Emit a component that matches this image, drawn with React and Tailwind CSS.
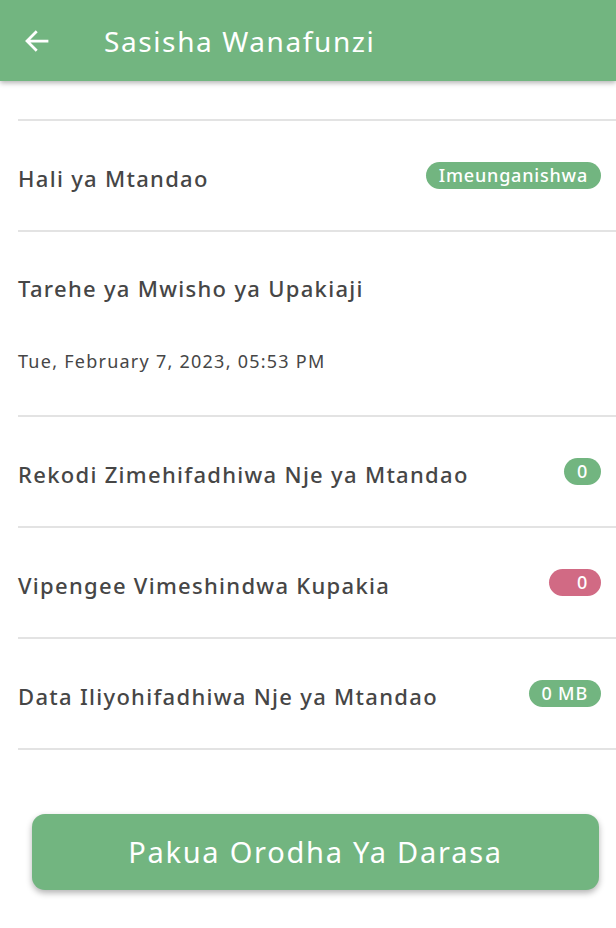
import React from "react";

const font = { fontFamily: '"Noto Sans", "Open Sans", sans-serif' };

function Row({ label, badge, color }) {
  return (
    <div className="flex h-[111px] items-center justify-between border-b-2 border-[#e3e3e3] pr-[15px]">
      <span className="pt-[6px] text-[22px] font-medium tracking-[1.3px] text-[#464646]">{label}</span>
      {badge && (
        <span className={`flex h-[27px] items-center rounded-full px-[13px] text-[18px] font-medium tracking-[0.8px] text-white ${color}`}>
          {badge}
        </span>
      )}
    </div>
  );
}

export default function App() {
  return (
    <div className="relative h-[928px] w-[616px] overflow-hidden bg-white" style={font}>
      <div className="relative z-10 flex h-[81px] items-center bg-[#72b580] shadow-[0_2px_5px_rgba(0,0,0,0.3)]">
        <svg className="ml-[22px] h-[30px] w-[30px]" viewBox="0 0 24 24" fill="none" stroke="white" strokeWidth="2.2" strokeLinecap="square">
          <path d="M20 12H5M11 5l-7 7 7 7" />
        </svg>
        <span className="ml-[52px] text-[28px] tracking-[1.6px] text-white">Sasisha Wanafunzi</span>
      </div>
      <div className="ml-[18px] mt-[38px] border-t-2 border-[#e3e3e3]">
        <Row label="Hali ya Mtandao" badge="Imeunganishwa" color="bg-[#72b580]" />
        <div className="flex h-[185px] flex-col justify-center gap-[43px] border-b-2 border-[#e3e3e3]">
          <span className="text-[22px] font-medium tracking-[1.3px] text-[#464646]">Tarehe ya Mwisho ya Upakiaji</span>
          <span className="text-[18px] tracking-[1.25px] text-[#464646]">Tue, February 7, 2023, 05:53 PM</span>
        </div>
        <Row label="Rekodi Zimehifadhiwa Nje ya Mtandao" badge="0" color="bg-[#72b580]" />
        <Row label="Vipengee Vimeshindwa Kupakia" badge="0" color="bg-[#d16a84] pl-[28px]" />
        <Row label="Data Iliyohifadhiwa Nje ya Mtandao" badge="0 MB" color="bg-[#72b580]" />
      </div>
      <div className="ml-[32px] mr-[17px] mt-[64px] flex h-[76px] items-center justify-center rounded-[13px] bg-[#72b580] shadow-[0_3px_6px_rgba(0,0,0,0.3)]">
        <span className="text-[29px] tracking-[1.75px] text-white">Pakua Orodha Ya Darasa</span>
      </div>
    </div>
  );
}
